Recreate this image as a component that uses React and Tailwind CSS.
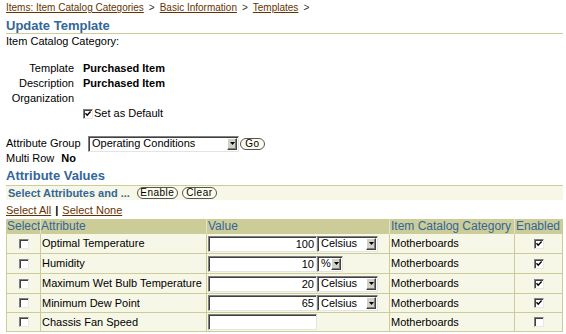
import React from "react";

const F = "font-['Liberation_Sans',Arial,Helvetica,sans-serif]";

function Check({ checked }) {
  return (
    <span className="relative inline-block w-[10px] h-[10px] shrink-0 bg-white border border-t-[#808080] border-l-[#808080] border-b-[#e8e8e8] border-r-[#e8e8e8] shadow-[inset_1px_1px_0_#404040]">
      {checked && (
        <svg className="absolute left-[0px] top-[0px]" width="8" height="8" viewBox="0 0 8 8">
          <path d="M1.5 3.2 L3.2 5.2 L6.6 1.6" fill="none" stroke="#000" strokeWidth="1.4" />
        </svg>
      )}
    </span>
  );
}

function Arrow() {
  return (
    <span className="flex items-center justify-center w-[10px] h-[12px] mr-[1px] bg-[#d4d0c8] border border-t-[#ffffff] border-l-[#ffffff] border-b-[#404040] border-r-[#404040] shadow-[inset_-1px_-1px_0_#808080]">
      <svg width="5" height="3" viewBox="0 0 5 3">
        <path d="M0 0 H5 L2.5 3 Z" fill="#000" />
      </svg>
    </span>
  );
}

function Sel({ text, w, h = "h-[16px]" }) {
  return (
    <div
      className={`flex items-center shrink-0 bg-white border border-t-[#808080] border-l-[#808080] border-b-[#e4e4e4] border-r-[#e4e4e4] shadow-[inset_1px_1px_0_#404040] ${w} ${h}`}
    >
      <span className="flex-1 pl-[3px] text-[11px] leading-[13px] whitespace-nowrap overflow-hidden">{text}</span>
      <Arrow />
    </div>
  );
}

function Btn({ children, w }) {
  return (
    <span
      className={`inline-flex items-center justify-center h-[12px] rounded-full border border-[#555555] bg-[#fcfcee] text-[10px] leading-[10px] tracking-[0.5px] text-black ${w}`}
    >
      {children}
    </span>
  );
}

const rows = [
  { name: "Optimal Temperature", val: "100", unit: "Celsius", en: true, h: "h-[20px]" },
  { name: "Humidity", val: "10", unit: "%", en: true, h: "h-[20px]" },
  { name: "Maximum Wet Bulb Temperature", val: "20", unit: "Celsius", en: true, h: "h-[20px]" },
  { name: "Minimum Dew Point", val: "65", unit: "Celsius", en: true, h: "h-[19px]" },
  { name: "Chassis Fan Speed", val: "", unit: null, en: false, h: "h-[19px]" },
];

const cols = "grid grid-cols-[34px_166px_183px_125px_49px]";

export default function App() {
  return (
    <div className={`w-[566px] h-[334px] overflow-hidden bg-white pl-[6px] pr-[3px] pt-[2px] text-black ${F}`}>
      {/* breadcrumb */}
      <div className="h-[12px] text-[10px] leading-[12px] whitespace-nowrap">
        <a className="text-[#663300] underline">Items: Item Catalog Categories</a>
        <span className="mx-[5px] text-[#333333]">&gt;</span>
        <a className="text-[#663300] underline">Basic Information</a>
        <span className="mx-[5px] text-[#333333]">&gt;</span>
        <a className="text-[#663300] underline">Templates</a>
        <span className="mx-[5px] text-[#333333]">&gt;</span>
      </div>

      {/* heading */}
      <div className="mt-[4px] text-[13px] leading-[15px] font-bold text-[#336699] border-b border-[#cccc99]">
        Update Template
      </div>
      <div className="text-[11px] leading-[15px]">Item Catalog Category:</div>

      {/* fields */}
      <div className="mt-[12px] text-[11px] leading-[15px]">
        <div className="flex">
          <span className="w-[68px] text-right">Template</span>
          <span className="ml-[9px] font-bold">Purchased Item</span>
        </div>
        <div className="flex">
          <span className="w-[68px] text-right">Description</span>
          <span className="ml-[9px] font-bold">Purchased Item</span>
        </div>
        <div className="flex">
          <span className="w-[68px] text-right">Organization</span>
        </div>
        <div className="flex items-center h-[15px]">
          <span className="w-[77px]" />
          <Check checked />
          <span className="ml-[1px]">Set as Default</span>
        </div>
      </div>

      {/* attribute group */}
      <div className="mt-[15px] flex items-center h-[15px] text-[11px] leading-[15px]">
        <span className="w-[82px]">Attribute Group</span>
        <Sel text="Operating Conditions" w="w-[151px]" h="h-[16px]" />
        <span className="ml-[1px]">
          <Btn w="w-[25px]">Go</Btn>
        </span>
      </div>
      <div className="flex text-[11px] leading-[15px]">
        <span>Multi Row</span>
        <span className="ml-[7px] font-bold">No</span>
      </div>

      <div className="mt-[2px] text-[13px] leading-[15px] font-bold text-[#336699]">Attribute Values</div>

      {/* bar */}
      <div className="mt-[2px] flex items-center h-[15px] border-t border-[#cccc99] bg-[#f7f7e7]">
        <span className="pl-[2px] text-[11px] leading-[14px] font-bold text-[#336699]">Select Attributes and ...</span>
        <span className="ml-[7px] flex">
          <Btn w="w-[41px]">Enable</Btn>
        </span>
        <span className="ml-[4px] flex">
          <Btn w="w-[35px]">Clear</Btn>
        </span>
      </div>

      <div className="mt-[3px] flex text-[11px] leading-[15px]">
        <a className="text-[#663300] underline">Select All</a>
        <span className="mx-[4px] font-bold">|</span>
        <a className="text-[#663300] underline">Select None</a>
      </div>

      {/* table */}
      <div className="mt-[1px] w-[557px]">
        <div className={`${cols} h-[15px] bg-[#cccc99] text-[12px] leading-[15px] text-[#336699] whitespace-nowrap`}>
          <div className="border-l border-[#cccc99] pl-0">Select</div>
          <div className="border-l border-[#e2e2c4] pl-0">Attribute</div>
          <div className="border-l border-[#e2e2c4] pl-[1px]">Value</div>
          <div className="border-l border-[#e2e2c4] pl-[1px]">Item Catalog Category</div>
          <div className="border-l border-[#e2e2c4] pl-[1px]">Enabled</div>
        </div>
        {rows.map((r) => (
          <div key={r.name} className={`${cols} ${r.h} text-[11px] leading-[13px] whitespace-nowrap`}>
            <div className="flex items-center justify-center border-l border-b border-[#cccc99] bg-[#f7f7e7]">
              <Check />
            </div>
            <div className="flex items-center pl-[1px] border-l border-b border-[#cccc99] bg-[#f7f7e7]">{r.name}</div>
            <div className="flex items-center pl-[1px] border-l border-b border-[#cccc99] bg-[#f7f7e7]">
              <div className="w-[109px] h-[16px] shrink-0 bg-white border border-t-[#808080] border-l-[#808080] border-b-[#e4e4e4] border-r-[#e4e4e4] shadow-[inset_1px_1px_0_#404040] text-right pr-[2px] text-[11px] leading-[14px]">
                {r.val}
              </div>
              {r.unit === "Celsius" && <Sel text="Celsius" w="w-[61px]" />}
              {r.unit === "%" && <Sel text="%" w="w-[26px]" />}
            </div>
            <div className="flex items-center pl-[1px] border-l border-b border-[#cccc99] bg-[#f7f7e7]">Motherboards</div>
            <div className="flex items-center justify-center border-l border-r border-b border-[#cccc99] bg-[#f7f7e7]">
              <Check checked={r.en} />
            </div>
          </div>
        ))}
      </div>
    </div>
  );
}
